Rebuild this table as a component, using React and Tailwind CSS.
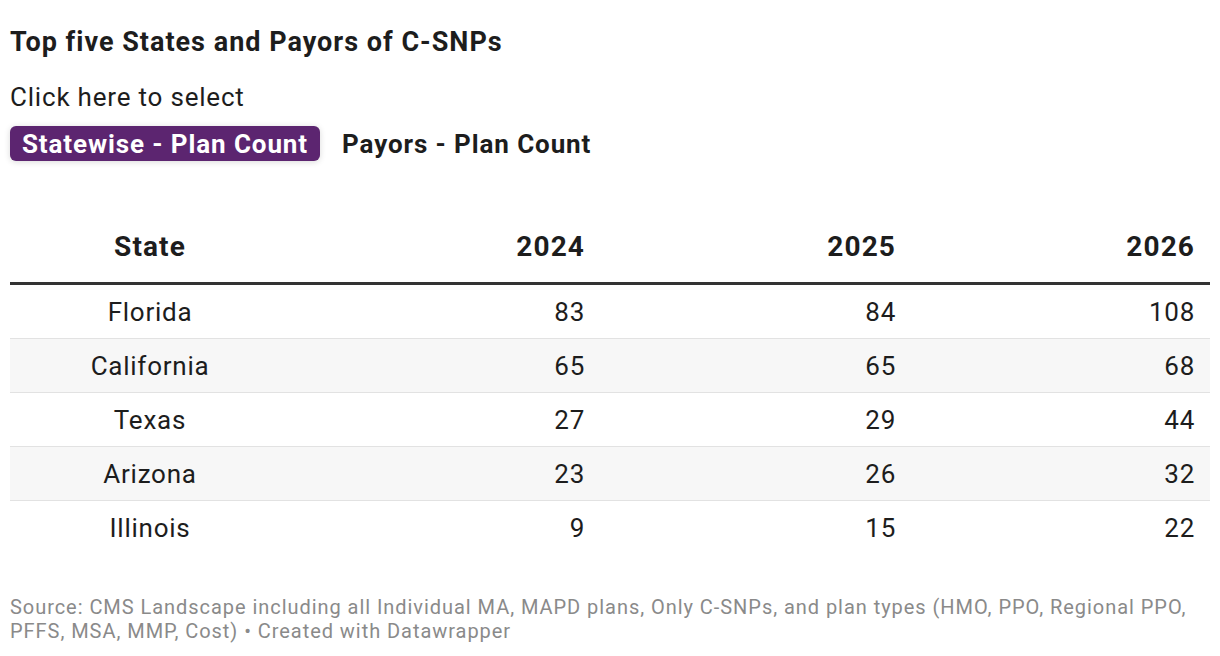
import React, { useState } from "react";

const rows = [
  { state: "Florida", a: 83, b: 84, c: 108 },
  { state: "California", a: 65, b: 65, c: 68 },
  { state: "Texas", a: 27, b: 29, c: 44 },
  { state: "Arizona", a: 23, b: 26, c: 32 },
  { state: "Illinois", a: 9, b: 15, c: 22 },
];

const cols = "grid grid-cols-[280px_310px_311px_299px]";

export default function App() {
  const [tab, setTab] = useState(0);

  return (
    <div className="w-[1220px] h-[656px] bg-white px-[10px] pt-[26px] font-['Roboto',sans-serif] text-[#1d1d1d] overflow-hidden">
      <h1 className="text-[27px] leading-[32px] font-bold tracking-[1px]">Top five States and Payors of C-SNPs</h1>

      <div className="mt-[24px] text-[26px] leading-[30px] tracking-[0.8px]">Click here to select</div>

      {/* Tabs */}
      <div className="mt-[14px] flex items-center gap-[22px]">
        <button
          onClick={() => setTab(0)}
          className={`h-[35px] w-[310px] rounded-[6px] text-[26px] font-bold leading-none tracking-[0.9px] ${
            tab === 0 ? "bg-[#5c2570] text-white shadow-[0_1px_6px_rgba(0,0,0,0.15)]" : "text-[#1d1d1d]"
          }`}
        >
          Statewise - Plan Count
        </button>
        <button
          onClick={() => setTab(1)}
          className={`h-[35px] rounded-[6px] text-[26px] font-bold leading-none tracking-[0.9px] ${
            tab === 1 ? "bg-[#5c2570] text-white px-[12px]" : "text-[#1d1d1d]"
          }`}
        >
          Payors - Plan Count
        </button>
      </div>

      {/* Table */}
      <div className="mt-[40px] w-[1200px]">
        <div className={`${cols} pt-[30px] pb-[19px] text-[28px] leading-[32px] font-bold tracking-[1.1px] border-b-[3px] border-[#333333]`}>
          <div className="text-center">State</div>
          <div className="text-right pr-[15px]">2024</div>
          <div className="text-right pr-[15px]">2025</div>
          <div className="text-right pr-[15px]">2026</div>
        </div>
        {rows.map((r, i) => (
          <div
            key={r.state}
            className={`${cols} h-[54px] items-center text-[26px] leading-[30px] tracking-[0.75px] ${
              i % 2 === 1 ? "bg-[#f7f7f7]" : "bg-white"
            } ${i < rows.length - 1 ? "border-b border-[#e2e2e2]" : ""}`}
          >
            <div className="text-center">{r.state}</div>
            <div className="text-right pr-[15px]">{r.a}</div>
            <div className="text-right pr-[15px]">{r.b}</div>
            <div className="text-right pr-[15px]">{r.c}</div>
          </div>
        ))}
      </div>

      <p className="mt-[40px] text-[20px] leading-[24px] tracking-[0.95px] text-[#8a8a8a] w-[1200px] whitespace-nowrap">
        Source: CMS Landscape including all Individual MA, MAPD plans, Only C-SNPs, and plan types (HMO, PPO, Regional PPO,
        <br />
        PFFS, MSA, MMP, Cost) • Created with Datawrapper
      </p>
    </div>
  );
}
